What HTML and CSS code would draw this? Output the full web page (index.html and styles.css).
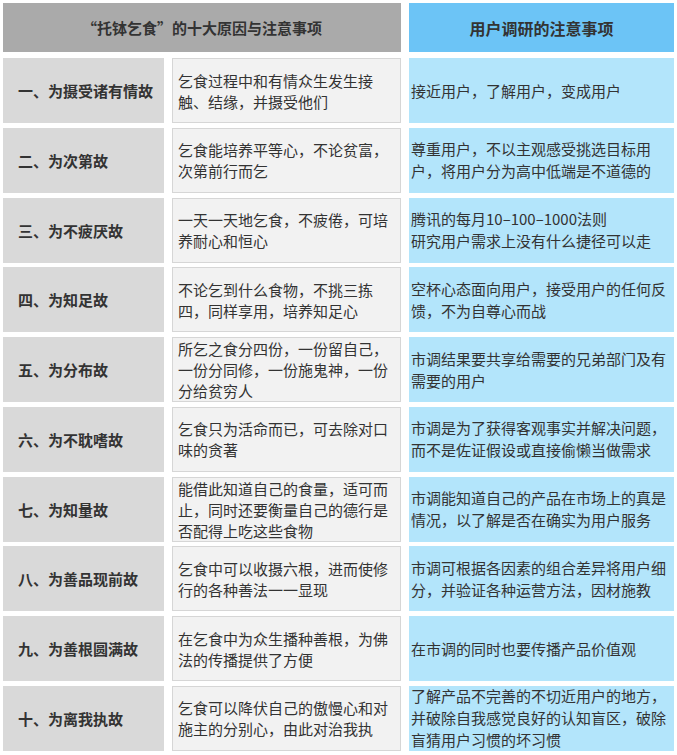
FILE: index.html
```html
<!DOCTYPE html>
<html lang="zh-CN">
<head>
<meta charset="utf-8">
<title>托钵乞食与用户调研</title>
<link rel="stylesheet" href="styles.css">
</head>
<body>
<div class="sheet">
  <div class="head-row">
    <div class="head head-gray"><span class="q-open">“</span>托钵乞食<span class="q-close">”</span>的十大原因与注意事项</div>
    <div class="head head-blue">用户调研的注意事项</div>
  </div>
  <div class="rows">
    <div class="label">一、为摄受诸有情故</div>
    <div class="desc">乞食过程中和有情众生发生接触、结缘，并摄受他们</div>
    <div class="note">接近用户，了解用户，变成用户</div>

    <div class="label">二、为次第故</div>
    <div class="desc">乞食能培养平等心，不论贫富，次第前行而乞</div>
    <div class="note">尊重用户，不以主观感受挑选目标用户，将用户分为高中低端是不道德的</div>

    <div class="label">三、为不疲厌故</div>
    <div class="desc">一天一天地乞食，不疲倦，可培养耐心和恒心</div>
    <div class="note">腾讯的每月10–100–1000法则<br>研究用户需求上没有什么捷径可以走</div>

    <div class="label">四、为知足故</div>
    <div class="desc">不论乞到什么食物，不挑三拣四，同样享用，培养知足心</div>
    <div class="note">空杯心态面向用户，接受用户的任何反馈，不为自尊心而战</div>

    <div class="label">五、为分布故</div>
    <div class="desc">所乞之食分四份，一份留自己，一份分同修，一份施鬼神，一份分给贫穷人</div>
    <div class="note">市调结果要共享给需要的兄弟部门及有需要的用户</div>

    <div class="label">六、为不耽嗜故</div>
    <div class="desc">乞食只为活命而已，可去除对口味的贪著</div>
    <div class="note">市调是为了获得客观事实并解决问题，而不是佐证假设或直接偷懒当做需求</div>

    <div class="label">七、为知量故</div>
    <div class="desc">能借此知道自己的食量，适可而止，同时还要衡量自己的德行是否配得上吃这些食物</div>
    <div class="note">市调能知道自己的产品在市场上的真是情况，以了解是否在确实为用户服务</div>

    <div class="label">八、为善品现前故</div>
    <div class="desc">乞食中可以收摄六根，进而使修行的各种善法一一显现</div>
    <div class="note">市调可根据各因素的组合差异将用户细分，并验证各种运营方法，因材施教</div>

    <div class="label">九、为善根圆满故</div>
    <div class="desc">在乞食中为众生播种善根，为佛法的传播提供了方便</div>
    <div class="note">在市调的同时也要传播产品价值观</div>

    <div class="label">十、为离我执故</div>
    <div class="desc">乞食可以降伏自己的傲慢心和对施主的分别心，由此对治我执</div>
    <div class="note">了解产品不完善的不切近用户的地方，并破除自我感觉良好的认知盲区，破除盲猜用户习惯的坏习惯</div>
  </div>
</div>
</body>
</html>
```
FILE: styles.css
```css
* { box-sizing: border-box; }
html, body { margin: 0; padding: 0; background: #ffffff; }
body {
  font-family: "Noto Sans CJK SC", "Noto Sans", sans-serif;
  font-size: 15px;
  color: #333333;
}
.sheet {
  padding: 3px 0 0 3px;
  width: 674px;
}
.head-row {
  display: grid;
  grid-template-columns: 398px 265px;
  column-gap: 8px;
  margin-bottom: 6px;
}
.head {
  height: 49px;
  display: flex;
  align-items: center;
  justify-content: center;
  font-weight: bold;
  font-size: 15px;
  color: #333333;
}
.q-open, .q-close { display: inline-block; width: 1em; }
.q-open { text-align: right; }
.q-close { text-align: left; }
.head-gray { background: #aaaaaa; }
.head-blue { background: #6cc4f6; font-size: 16px; }
.rows {
  display: grid;
  grid-template-columns: 161px 229px 265px;
  grid-auto-rows: 65px;
  column-gap: 8px;
  row-gap: 4.75px;
}
.label {
  background: #d9d9d9;
  display: flex;
  align-items: center;
  padding-left: 15px;
  font-weight: bold;
  font-size: 15px;
}
.desc {
  background: #f2f2f2;
  border: 1px solid #d6d6d6;
  display: flex;
  align-items: center;
  padding: 0 8px 0 5px;
  line-height: 21px;
}
.note {
  background: #b3e5fb;
  display: flex;
  align-items: center;
  padding: 0 4px 0 2px;
  line-height: 22px;
}
```
